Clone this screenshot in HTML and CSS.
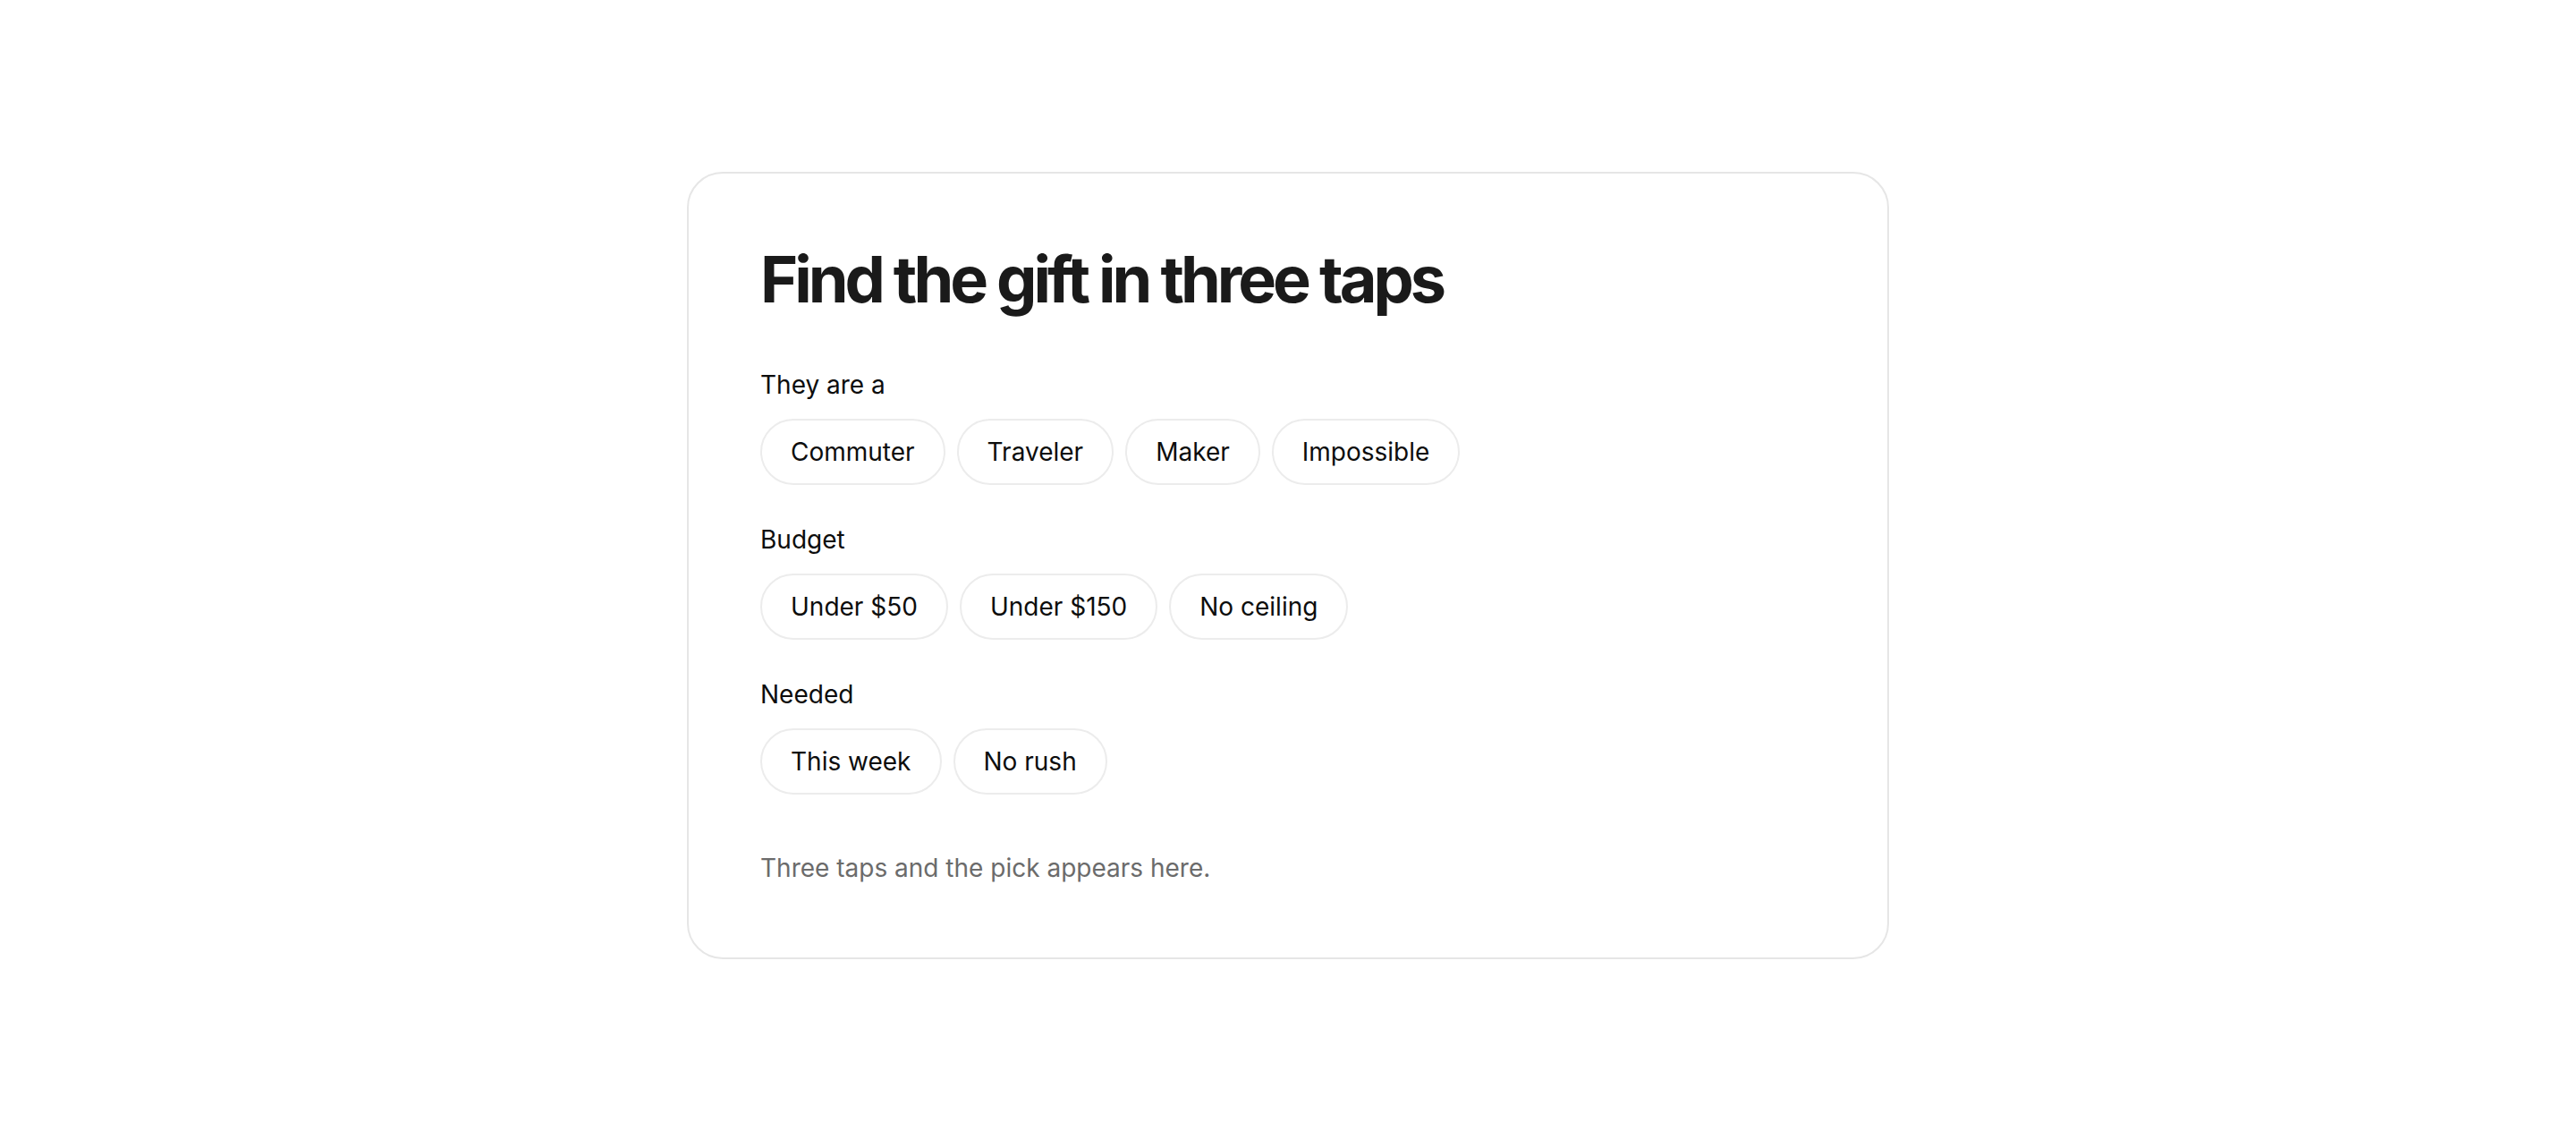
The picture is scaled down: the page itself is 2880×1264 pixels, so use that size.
FILE: index.html
```html
<!DOCTYPE html>
<html lang="en">
<head>
    <meta charset="UTF-8">
    <meta name="viewport" content="width=device-width, initial-scale=1.0">
    <title>Gift Finder</title>
    <link rel="stylesheet" href="styles.css">
</head>
<body>
    <div class="card">
        <h1>Find the gift in three taps</h1>

        <div class="group">
            <p class="label">They are a</p>
            <div class="chips">
                <button class="chip">Commuter</button>
                <button class="chip">Traveler</button>
                <button class="chip">Maker</button>
                <button class="chip">Impossible</button>
            </div>
        </div>

        <div class="group">
            <p class="label">Budget</p>
            <div class="chips">
                <button class="chip">Under $50</button>
                <button class="chip">Under $150</button>
                <button class="chip">No ceiling</button>
            </div>
        </div>

        <div class="group">
            <p class="label">Needed</p>
            <div class="chips">
                <button class="chip">This week</button>
                <button class="chip">No rush</button>
            </div>
        </div>

        <p class="result">Three taps and the pick appears here.</p>
    </div>
</body>
</html>
```

FILE: styles.css
```css
* {
    box-sizing: border-box;
}
body {
    margin: 0;
    min-height: 100vh;
    display: flex;
    align-items: center;
    justify-content: center;
    background: #fff;
    color: #0d0d0d;
    font-family: Inter, "Noto Sans", sans-serif;
}
.card {
    width: 1344px;
    padding: 80px;
    border: 2px solid #e6e6e6;
    border-radius: 40px;
    background: #fff;
}
h1 {
    margin: 0 0 60px;
    font-size: 72px;
    font-weight: 700;
    line-height: 1.05;
    letter-spacing: -0.056em;
    color: #1a1a1a;
}
.group + .group {
    margin-top: 40px;
}
.label {
    margin: 0 0 17px;
    font-size: 28px;
    line-height: 1.5;
}
.chips {
    display: flex;
    flex-wrap: wrap;
    gap: 13px;
}
.chip {
    padding: 14px 32px;
    border: 2px solid #ececec;
    border-radius: 999px;
    background: #fff;
    color: #0d0d0d;
    font-family: inherit;
    font-size: 28px;
    line-height: 1.5;
    cursor: pointer;
}
.chip:hover {
    border-color: #d6d6d6;
}
.result {
    margin: 63px 0 0;
    font-size: 28px;
    line-height: 1.4;
    color: #6b6b6b;
}
```
